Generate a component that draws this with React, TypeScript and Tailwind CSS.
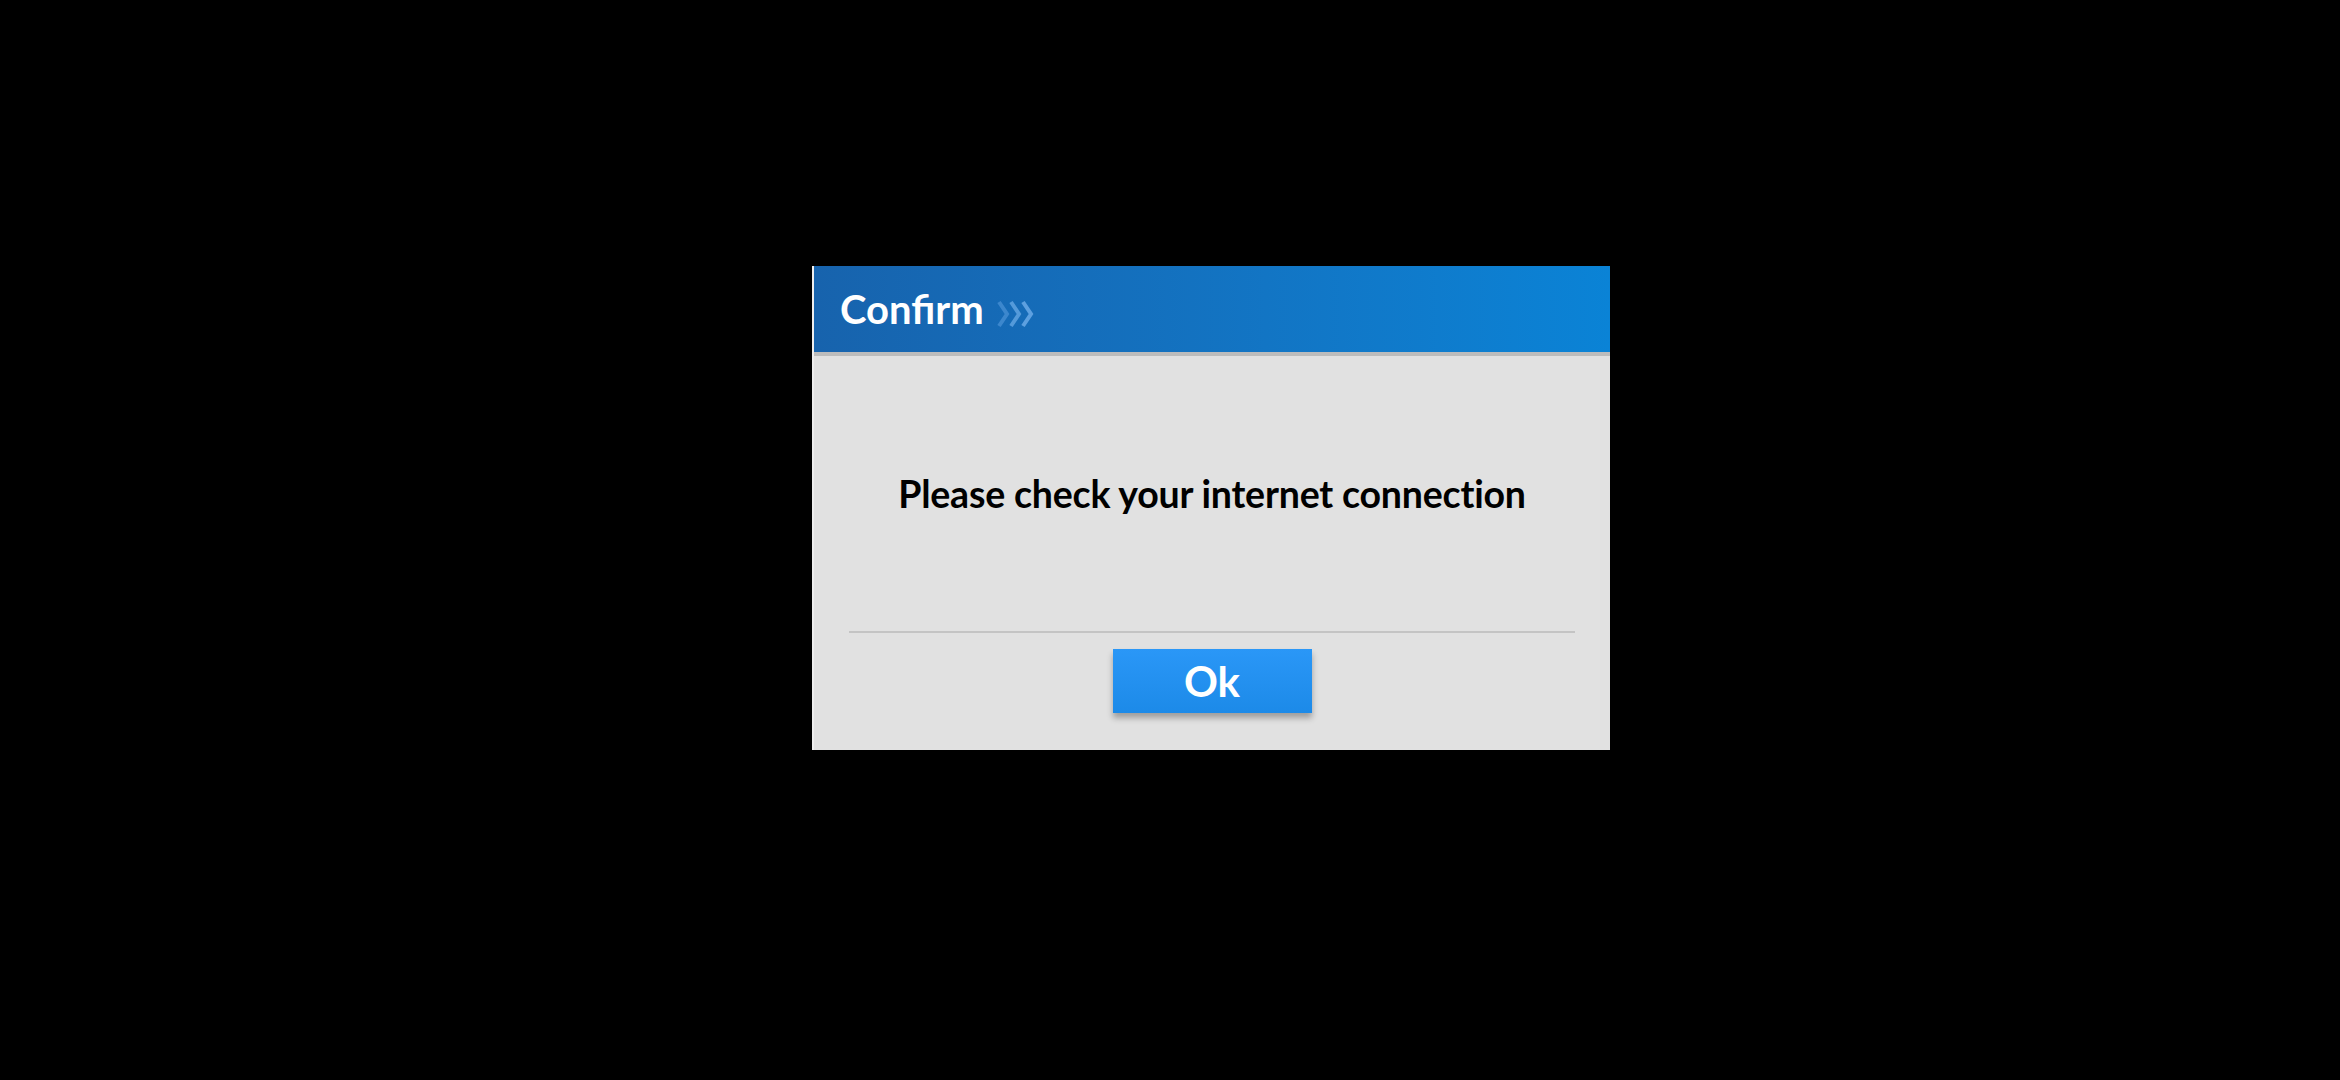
import React from "react";

function Chevrons() {
    return (
        <svg width="42" height="28" viewBox="0 0 42 28" fill="none" className="ml-[12px] mt-[10px]">
            <polyline points="3,2 11,14 3,26" stroke="#5c9ee0" strokeWidth="4" opacity="0.55" />
            <polyline points="15,2 23,14 15,26" stroke="#6aa9e6" strokeWidth="4" opacity="0.75" />
            <polyline points="27,2 35,14 27,26" stroke="#6aa9e6" strokeWidth="4" opacity="0.85" />
        </svg>
    );
}

export default function App() {
    return (
        <div className="w-full h-[1080px] bg-black pl-[812px] pt-[266px]" style={{ fontFamily: "Lato, 'Noto Sans', sans-serif" }}>
            <div className="w-[798px] h-[484px] bg-[#e1e1e1] flex flex-col border-l-2 border-[#eeeeee]">
                {/* header */}
                <div className="h-[90px] flex items-center px-[26px] bg-gradient-to-r from-[#1763ad] to-[#0a83d6] border-b-4 border-[#bcbcbc]">
                    <span className="text-white text-[40px] font-bold leading-none">Confirm</span>
                    <Chevrons />
                </div>
                {/* message */}
                <div className="h-[275px] flex items-center justify-center pt-[2px]">
                    <p className="text-black text-[37.5px] font-bold tracking-[-0.2px]">Please check your internet connection</p>
                </div>
                <div className="mx-[35px] h-[2px] bg-[#c4c4c4]" />
                <div className="flex justify-center pt-[16px]">
                    <button className="w-[199px] h-[64px] bg-gradient-to-b from-[#2a97f7] to-[#1c8ae8] text-white text-[42px] font-bold shadow-[0_5px_6px_rgba(0,0,0,0.3)] flex items-center justify-center">
                        Ok
                    </button>
                </div>
            </div>
        </div>
    );
}
